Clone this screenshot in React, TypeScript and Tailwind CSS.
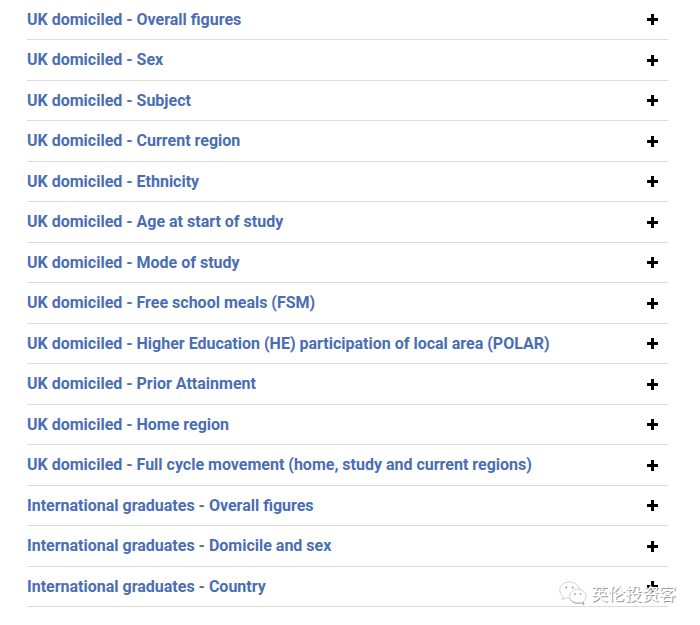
import React, { useState } from 'react'

const sections = [
  'UK domiciled - Overall figures',
  'UK domiciled - Sex',
  'UK domiciled - Subject',
  'UK domiciled - Current region',
  'UK domiciled - Ethnicity',
  'UK domiciled - Age at start of study',
  'UK domiciled - Mode of study',
  'UK domiciled - Free school meals (FSM)',
  'UK domiciled - Higher Education (HE) participation of local area (POLAR)',
  'UK domiciled - Prior Attainment',
  'UK domiciled - Home region',
  'UK domiciled - Full cycle movement (home, study and current regions)',
  'International graduates - Overall figures',
  'International graduates - Domicile and sex',
  'International graduates - Country',
]

const ToggleIcon = ({ open }: { open: boolean }) => (
  <svg className="w-[11px] h-[11px] shrink-0" viewBox="0 0 11 11" fill="black" aria-hidden="true">
    <rect x="0" y="4" width="11" height="3" />
    {!open && <rect x="4" y="0" width="3" height="11" />}
  </svg>
)

const Bubbles = () => (
  <svg className="w-7 h-6" viewBox="0 0 28 24" fill="white" stroke="#c4c4c4" strokeWidth="0.8" aria-hidden="true">
    <path d="M10.500 1C5 1 .8 4.600 .8 9.200c0 2.600 1.400 4.900 3.600 6.400l-1 3 3.500-1.800c1.100.3 2.300.5 3.600.5 5.400 0 9.700-3.600 9.700-8.100S15.900 1 10.500 1z" />
    <path d="M18.800 8.200c-4.600 0-8.200 3.100-8.200 7s3.600 7 8.200 7c1 0 2-.2 2.900-.4l3.300 1.600-.9-2.700c1.800-1.300 2.900-3.300 2.900-5.500 0-3.900-3.600-7-8.200-7z" />
    <path d="M11.500 19c1.500 2 4 3.200 7.300 3.200 1 0 2-.2 2.900-.4l3.300 1.600-.9-2.700" fill="none" stroke="#9a9a9a" />
    <g fill="#a3a3a3" stroke="none">
      <circle cx="7.200" cy="6.500" r="1.100" />
      <circle cx="13.800" cy="6.500" r="1.100" />
      <circle cx="16" cy="13" r="0.900" />
      <circle cx="21.500" cy="13" r="0.900" />
    </g>
  </svg>
)

export default function App() {
  const [openIndex, setOpenIndex] = useState<number | null>(null)

  return (
    <main className="relative min-h-screen bg-white pl-[27px] pr-8">
      <ul>
        {sections.map((title, i) => (
          <li key={title} className="border-b border-[#dcdcdc]">
            <h2>
              <button
                type="button"
                aria-expanded={openIndex === i}
                onClick={() => setOpenIndex(openIndex === i ? null : i)}
                className={`flex w-full items-center justify-between pr-[10px] text-left font-['Roboto',sans-serif] text-base font-bold text-[#4a6eb3] ${i % 2 ? 'h-10' : 'h-[39px]'}`}
              >
                {title}
                <ToggleIcon open={openIndex === i} />
              </button>
            </h2>
          </li>
        ))}
      </ul>

      {/* account watermark over the last row */}
      <div className="pointer-events-none absolute right-[24px] top-[581px] flex items-center gap-1">
        <Bubbles />
        <span className="font-['Noto_Sans_CJK_SC',sans-serif] text-[17px] leading-6 text-white [text-shadow:1px_1px_0_#999]">英伦投资客</span>
      </div>
    </main>
  )
}
